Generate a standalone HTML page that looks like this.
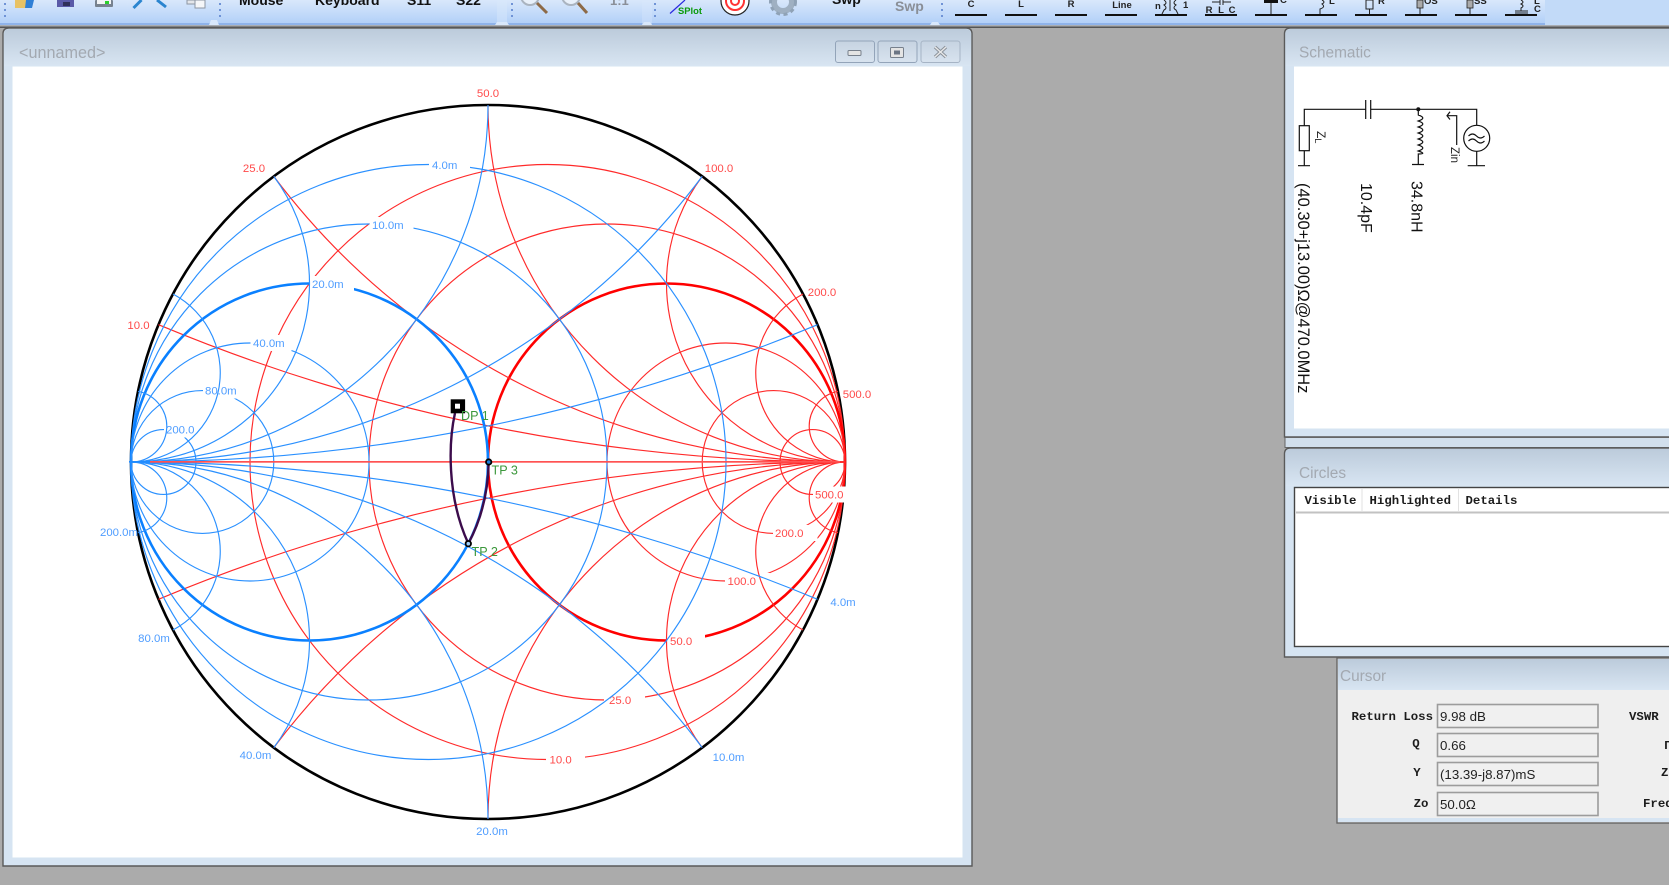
<!DOCTYPE html>
<html><head><meta charset="utf-8"><title>Smith</title>
<style>
html,body{margin:0;padding:0;width:1669px;height:885px;overflow:hidden;background:#ababab}
svg{display:block;filter:blur(.35px)}
text{font-family:"Liberation Sans",sans-serif}
.mono{font-family:"Liberation Mono",monospace;font-size:12.35px;fill:#1c1c1c;font-weight:bold}
.t{font-size:15.4px;fill:#a3a9b1}
.r{font-size:11.4px;fill:#ff4a4a}
.b{font-size:11.4px;fill:#4f9dff}
.g{font-size:12.6px;fill:#3c983c}
.f{font-size:13.3px;fill:#222}
.sch{font-size:16px;fill:#111}
.tb{font-size:14px;font-weight:bold;fill:#111}
.tl{font-size:9.5px;font-weight:bold;fill:#222}
</style></head>
<body>
<svg width="1669" height="885" viewBox="0 0 1669 885" xmlns="http://www.w3.org/2000/svg">
<defs>
<linearGradient id="tbg" x1="0" y1="0" x2="0" y2="1"><stop offset="0" stop-color="#d9e8fb"/><stop offset="1" stop-color="#b1cff8"/></linearGradient>
<linearGradient id="ttl" x1="0" y1="0" x2="0" y2="1"><stop offset="0" stop-color="#bccbdb"/><stop offset="1" stop-color="#d8e5f2"/></linearGradient>
<linearGradient id="btn" x1="0" y1="0" x2="0" y2="1"><stop offset="0" stop-color="#c6d3e1"/><stop offset="1" stop-color="#d8e3ef"/></linearGradient>
</defs>

<rect width="1669" height="885" fill="#ababab"/>

<!-- toolbar -->
<rect x="0" y="0" width="1669" height="25" fill="#c2daf8"/>
<rect x="0" y="0" width="1545" height="24" fill="url(#tbg)"/>
<rect x="0" y="23" width="1545" height="2" fill="#8fb3ea"/>
<rect x="0" y="25" width="1669" height="1.5" fill="#a9adb2"/>
<rect x="0" y="26.5" width="1669" height="1.5" fill="#555"/>
<g fill="#d9e8fb">
<path d="M209 25 l2 -5 h6 l2 5z"/><rect x="497" y="0" width="10" height="25" opacity=".45"/><path d="M495 25 l2 -3 h10 l2 3z"/>
<rect x="642" y="0" width="10" height="25" opacity=".35"/><path d="M642 25 l2 -3 h6 l2 3z"/><path d="M930 25 l2 -3 h6 l2 3z"/>
</g>
<g fill="#6f93d6">
<rect x="4" y="3" width="2" height="2"/><rect x="4" y="9" width="2" height="2"/><rect x="4" y="15" width="2" height="2"/>
<rect x="219" y="3" width="2" height="2"/><rect x="219" y="9" width="2" height="2"/><rect x="219" y="15" width="2" height="2"/>
<rect x="511" y="3" width="2" height="2"/><rect x="511" y="9" width="2" height="2"/><rect x="511" y="15" width="2" height="2"/>
<rect x="654" y="3" width="2" height="2"/><rect x="654" y="9" width="2" height="2"/><rect x="654" y="15" width="2" height="2"/>
<rect x="941" y="3" width="2" height="2"/><rect x="941" y="9" width="2" height="2"/><rect x="941" y="15" width="2" height="2"/>
</g>
<!-- left icons -->
<path d="M15 0h14v8H15z" fill="#e8c265"/><path d="M26 0h8l-2 8h-7z" fill="#2f7fd6"/>
<path d="M57 0h17v7H57z" fill="#5a5aa8"/><rect x="63" y="2" width="7" height="4" fill="#30305a"/>
<rect x="95" y="0" width="18" height="7" rx="1" fill="#77828f"/><rect x="97" y="0" width="14" height="4" fill="#f2f4f6"/><rect x="105" y="1" width="4" height="3" fill="#2bd02b"/>
<path d="M133.5 8L141.5 0" stroke="#2b85cf" stroke-width="3" fill="none"/><path d="M157 0L166 7" stroke="#2b85cf" stroke-width="3" fill="none"/>
<rect x="187" y="0" width="9" height="4" fill="#e4e6ea" stroke="#8d96a3"/><rect x="195" y="0" width="10" height="8" fill="#f5f6f8" stroke="#8d96a3"/>
<text class="tb" x="239" y="5">Mouse</text><text class="tb" x="315" y="5">Keyboard</text><text class="tb" x="407" y="5">S11</text><text class="tb" x="456" y="5">S22</text>
<!-- magnifiers -->
<circle cx="530" cy="-4" r="9" fill="#e8f0fa" stroke="#aab4c0" stroke-width="2"/><path d="M537 3L547 13" stroke="#8d6a47" stroke-width="3"/>
<circle cx="571" cy="-4" r="9" fill="#e8f0fa" stroke="#aab4c0" stroke-width="2"/><path d="M578 3L587 13" stroke="#8d6a47" stroke-width="3"/>
<text x="610" y="5" font-size="13" font-weight="bold" fill="#8a8f98">1:1</text>
<path d="M670 13.5L685 0" stroke="#2a2ae0" stroke-width="1.2"/><text x="678" y="14" font-size="9.4" font-weight="bold" fill="#0b9a0b">SPlot</text>
<circle cx="735" cy="1" r="14" fill="#fff" stroke="#222" stroke-width="1.2"/><circle cx="735" cy="1" r="9" fill="none" stroke="#f33" stroke-width="2"/><circle cx="735" cy="1" r="4" fill="none" stroke="#f33" stroke-width="2"/>
<circle cx="783" cy="2" r="9" fill="none" stroke="#9fb0c2" stroke-width="6"/><circle cx="783" cy="2" r="12.5" fill="none" stroke="#8fa2b6" stroke-width="3" stroke-dasharray="4 3.5"/>
<text class="tb" x="832" y="4">Swp</text><text x="895" y="11" font-size="14" font-weight="bold" fill="#8a8f97">Swp</text>
<!-- component bars -->
<g fill="#111">
<rect x="955" y="14" width="32" height="2"/><rect x="1005" y="14" width="32" height="2"/><rect x="1055" y="14" width="32" height="2"/><rect x="1105" y="14" width="32" height="2"/><rect x="1155" y="14" width="32" height="2"/><rect x="1205" y="14" width="32" height="2"/><rect x="1255" y="14" width="32" height="2"/><rect x="1305" y="14" width="32" height="2"/><rect x="1355" y="14" width="32" height="2"/><rect x="1405" y="14" width="32" height="2"/><rect x="1455" y="14" width="32" height="2"/><rect x="1505" y="14" width="32" height="2"/>
</g>
<text class="tl" x="971" y="7" text-anchor="middle">C</text><text class="tl" x="1021" y="7" text-anchor="middle">L</text><text class="tl" x="1071" y="7" text-anchor="middle">R</text><text class="tl" x="1122" y="8" text-anchor="middle">Line</text>
<text class="tl" x="1155" y="9">n</text><text class="tl" x="1183" y="8">1</text>
<g fill="none" stroke="#222" stroke-width="1">
<path d="M1164 0q4 3 0 5q4 3 0 5l-2 4M1176 0q-4 3 0 5q-4 3 0 5l2 4M1170 0v11"/>
<path d="M1212 2h8M1220 0v5M1223 0v5M1223 2h8"/>
<path d="M1271 0v14M1320 14v-5q6-2 2-5q4-2 0-4"/>
<path d="M1366 0h7v9h-7zM1369.5 9v5"/>
<path d="M1420 8v6M1470 8v6"/>
<path d="M1521 0q4 2 0 4q4 2 0 4v3M1515 11h13M1515 13h13"/>
</g>
<rect x="1264" y="0" width="14" height="3" fill="#111"/>
<rect x="1417" y="0" width="6" height="8" fill="#aaa" stroke="#222" stroke-width=".8"/><rect x="1467" y="0" width="6" height="8" fill="#aaa" stroke="#222" stroke-width=".8"/>
<text class="tl" x="1209" y="13" text-anchor="middle">R</text><text class="tl" x="1221" y="13" text-anchor="middle">L</text><text class="tl" x="1232" y="13" text-anchor="middle">C</text>
<text class="tl" x="1280" y="3">C</text><text class="tl" x="1329" y="4">L</text><text class="tl" x="1378" y="4">R</text><text class="tl" x="1424" y="4">OS</text><text class="tl" x="1474" y="4">SS</text><text class="tl" x="1534" y="4">L</text><text class="tl" x="1534" y="12">C</text>

<!-- main window -->
<path d="M3 866V34q0-6 6-6H966q6 0 6 6V866Z" fill="#d6e4f2" stroke="#5a5a5a" stroke-width="1.4"/>
<path d="M4 66V34q0-5 5-5H966q5 0 5 5V66Z" fill="url(#ttl)"/>
<rect x="12.5" y="66.5" width="950" height="791" fill="#fff"/>
<text class="t" style="font-size:16.2px" x="19" y="58">&lt;unnamed&gt;</text>
<g stroke="#93a4b9" stroke-width="1" fill="url(#btn)">
<rect x="835.5" y="41" width="39" height="21.5" rx="2.5"/><rect x="878" y="41" width="39" height="21.5" rx="2.5"/><rect x="921" y="41" width="39" height="21.5" rx="2.5" stroke="#a6b4c5"/>
</g>
<rect x="848" y="50.5" width="13" height="5" rx="1" fill="#e4e4e4" stroke="#77808c"/>
<rect x="890.5" y="47.5" width="13" height="10" rx="1" fill="#e4e4e4" stroke="#77808c"/><rect x="894" y="50.5" width="6" height="4" fill="#6b7584"/>
<path d="M935 47l11 10M946 47l-11 10" stroke="#8b929b" stroke-width="3.4"/><path d="M935 47l11 10M946 47l-11 10" stroke="#e8e8e8" stroke-width="1.4"/>

<!-- Smith chart -->
<circle cx="488" cy="462" r="357" fill="none" stroke="#000" stroke-width="2.6"/>
<!-- red constant-r -->
<g fill="none" stroke="#ff2a2a" stroke-width="1.15">
<circle cx="547.5" cy="462" r="297.5"/><circle cx="607" cy="462" r="238"/><circle cx="666.5" cy="462" r="178.5" stroke="#ff0000" stroke-width="2.6"/><circle cx="726" cy="462" r="119"/><circle cx="773.6" cy="462" r="71.4"/><circle cx="812.5" cy="462" r="32.45"/>
</g>
<g fill="#fff">
<rect x="546" y="751.5" width="39" height="16"/><rect x="604" y="692" width="41" height="16"/><rect x="667" y="633" width="38" height="16"/><rect x="725" y="573" width="45" height="16"/><rect x="773" y="525" width="44.5" height="16"/><rect x="813" y="486.5" width="44" height="16"/>
</g>
<!-- red constant-x -->
<g fill="none" stroke="#ff2a2a" stroke-width="1.15">
<path d="M158.500 324.700A1785 1785 0 0 0 845 462M158.500 599.300A1785 1785 0 0 1 845 462"/>
<path d="M273.800 176.400A714 714 0 0 0 845 462M273.800 747.600A714 714 0 0 1 845 462"/>
<path d="M488 105A357 357 0 0 0 845 462M488 819A357 357 0 0 1 845 462"/>
<path d="M702.200 176.400A178.500 178.500 0 0 0 845 462M702.200 747.600A178.500 178.500 0 0 1 845 462" transform="translate(0 0)"/>
<path d="M803 294A89.250 89.250 0 0 0 845 462M803 630A89.250 89.250 0 0 1 845 462"/>
<path d="M837.900 391.300A35.700 35.700 0 0 0 845 462M837.900 532.700A35.700 35.700 0 0 1 845 462"/>
</g>
<text class="r" x="549.5" y="763.5">10.0</text><text class="r" x="609" y="704">25.0</text><text class="r" x="670" y="645">50.0</text><text class="r" x="727.5" y="585">100.0</text><text class="r" x="775" y="537">200.0</text><text class="r" x="815" y="498.5">500.0</text>
<text class="r" x="488" y="97" text-anchor="middle">50.0</text><text class="r" x="254" y="172" text-anchor="middle">25.0</text><text class="r" x="719" y="172" text-anchor="middle">100.0</text><text class="r" x="138.5" y="329" text-anchor="middle">10.0</text><text class="r" x="822" y="296" text-anchor="middle">200.0</text><text class="r" x="857" y="398" text-anchor="middle">500.0</text>
<!-- blue constant-g -->
<g fill="none" stroke="#2a90ff" stroke-width="1.15">
<circle cx="428.5" cy="462" r="297.5"/><circle cx="369" cy="462" r="238"/><circle cx="309.5" cy="462" r="178.5" stroke="#0a80ff" stroke-width="2.6"/><circle cx="250" cy="462" r="119"/><circle cx="202.4" cy="462" r="71.4"/><circle cx="163.5" cy="462" r="32.45"/>
</g>
<g fill="#fff">
<rect x="429" y="157" width="41" height="16"/><rect x="369.5" y="217" width="44" height="16"/><rect x="310" y="276" width="44" height="16"/><rect x="250.5" y="335" width="41" height="16"/><rect x="203" y="382.5" width="44" height="16"/><rect x="164" y="421.5" width="44" height="16"/>
</g>
<!-- blue constant-b -->
<g fill="none" stroke="#2a90ff" stroke-width="1.15">
<path d="M817.500 324.700A1785 1785 0 0 1 131 462M817.500 599.300A1785 1785 0 0 0 131 462"/>
<path d="M702.200 176.400A714 714 0 0 1 131 462M702.200 747.600A714 714 0 0 0 131 462"/>
<path d="M488 105A357 357 0 0 1 131 462M488 819A357 357 0 0 0 131 462"/>
<path d="M273.800 176.400A178.500 178.500 0 0 1 131 462M273.800 747.600A178.500 178.500 0 0 0 131 462"/>
<path d="M173 294A89.250 89.250 0 0 1 131 462M173 630A89.250 89.250 0 0 0 131 462"/>
<path d="M138.100 391.300A35.700 35.700 0 0 1 131 462M138.100 532.700A35.700 35.700 0 0 0 131 462"/>
</g>
<text class="b" x="432" y="169">4.0m</text><text class="b" x="372" y="229">10.0m</text><text class="b" x="312" y="288">20.0m</text><text class="b" x="253" y="347">40.0m</text><text class="b" x="205" y="394.5">80.0m</text><text class="b" x="166" y="433.5">200.0</text>
<text class="b" x="492" y="835" text-anchor="middle">20.0m</text><text class="b" x="255.5" y="759" text-anchor="middle">40.0m</text><text class="b" x="728.5" y="761" text-anchor="middle">10.0m</text><text class="b" x="843" y="606" text-anchor="middle">4.0m</text><text class="b" x="154" y="642" text-anchor="middle">80.0m</text><text class="b" x="119" y="536" text-anchor="middle">200.0m</text>
<rect x="129" y="461" width="30" height="1.6" fill="#1f8bff"/>
<rect x="150" y="461" width="690" height="1.7" fill="#ff5252"/>
<!-- trace -->
<path d="M455 413C449 440 446 495 468.3 543.5C480 522 488 495 488.7 462" fill="none" stroke="#3c0c4c" stroke-width="2.4"/>
<rect x="450.7" y="399.3" width="14.4" height="14" fill="#000"/><rect x="455" y="403.7" width="5" height="5" fill="#fff"/>
<circle cx="488.7" cy="462" r="2.7" fill="#1c7fe0" stroke="#000" stroke-width="1.8"/>
<circle cx="468.3" cy="543.7" r="2.7" fill="#9fd0ff" stroke="#000" stroke-width="1.8"/>
<text class="g" x="461" y="420">DP 1</text><text class="g" x="491.5" y="474.5">TP 3</text><text class="g" x="471.5" y="556">TP 2</text>

<!-- schematic window -->
<path d="M1284.5 437V34q0-6 6-6H1680V437Z" fill="#d6e4f2" stroke="#5a5a5a" stroke-width="1.4"/>
<path d="M1285.5 66V34q0-5 5-5H1680V66Z" fill="url(#ttl)"/>
<rect x="1294" y="66.5" width="380" height="362" fill="#fff"/>
<text class="t" x="1299" y="57.5">Schematic</text>
<rect x="1285" y="437.5" width="390" height="10" fill="#d2dfec" stroke="#666" stroke-width="1"/>
<g fill="none" stroke="#111" stroke-width="1.2">
<path d="M1304.3 125.7V109.3H1365.7M1370.7 109.3H1476.7V125.3"/>
<path d="M1365.7 100V119M1370.7 100V119"/>
<rect x="1299.3" y="125.7" width="10" height="25"/>
<path d="M1304.3 150.7V165.7M1298 165.7H1310"/>
<path d="M1418.3 109.3V115q9 3 0 6q9 3 0 6q9 3 0 6q9 3 0 6q9 3 0 6q9 3 0 6q9 3 0 3V164M1412 164.500H1424"/>
<path d="M1456.700 145V115.700H1447M1450 111.800L1447 115.700L1450 119.500"/>
<circle cx="1476.700" cy="138.300" r="13"/>
<path d="M1476.700 151.300V165.700M1467.700 165.700H1485"/>
<path d="M1468.500 136q4-4 8 0t8 0M1468.500 141q4-4 8 0t8 0"/>
</g>
<circle cx="1418.300" cy="109.300" r="2" fill="#111"/>
<text x="1317" y="131" font-size="12" fill="#222" transform="rotate(90 1317 131)">Z<tspan font-size="9" dy="2">L</tspan></text>
<text x="1451" y="147" font-size="11.500" fill="#222" transform="rotate(90 1451 147)">Zin</text>
<text class="sch" style="font-size:16.450px" x="1298" y="183" transform="rotate(90 1298 183)">(40.30+j13.00)Ω@470.0MHz</text>
<text class="sch" x="1361" y="183" transform="rotate(90 1361 183)">10.4pF</text>
<text class="sch" x="1411.500" y="181" transform="rotate(90 1411.500 181)">34.8nH</text>

<!-- circles window -->
<path d="M1284.500 657V454q0-6 6-6H1680V657Z" fill="#d6e4f2" stroke="#5a5a5a" stroke-width="1.4"/>
<path d="M1285.500 486V454q0-5 5-5H1680V486Z" fill="url(#ttl)"/>
<text class="t" x="1299" y="478">Circles</text>
<rect x="1294.500" y="487.500" width="390" height="159" fill="#fff" stroke="#444" stroke-width="1.400"/>
<rect x="1296" y="511.500" width="380" height="2" fill="#c2c2c2"/>
<rect x="1361.500" y="489" width="1" height="22" fill="#e2e2e2"/><rect x="1458" y="489" width="1" height="22" fill="#e2e2e2"/>
<text class="mono" x="1304.500" y="504">Visible</text><text class="mono" x="1369.500" y="504">Highlighted</text><text class="mono" x="1465.500" y="504">Details</text>

<!-- cursor window -->
<rect x="1337" y="658" width="340" height="165" fill="#efefef" stroke="#666" stroke-width="1.400"/>
<rect x="1338" y="659" width="335" height="31" fill="url(#ttl)"/>
<rect x="1338" y="818" width="335" height="4" fill="#d6e4f2"/>
<text class="t" x="1340" y="681">Cursor</text>
<text class="mono" x="1433" y="720" text-anchor="end">Return Loss</text>
<text class="mono" x="1416" y="747" text-anchor="middle">Q</text>
<text class="mono" x="1417" y="776" text-anchor="middle">Y</text>
<text class="mono" x="1421" y="807" text-anchor="middle">Zo</text>
<text class="mono" x="1629" y="720">VSWR</text><text class="mono" x="1664" y="749">Γ</text><text class="mono" x="1661" y="776">Z</text><text class="mono" x="1643" y="807">Freq</text>
<g fill="#f0f0f0" stroke="#9c9c9c" stroke-width="1.600">
<rect x="1437.500" y="704.500" width="160.500" height="23"/><rect x="1437.500" y="733.500" width="160.500" height="23"/><rect x="1437.500" y="762.500" width="160.500" height="23"/><rect x="1437.500" y="792.500" width="160.500" height="23"/>
</g>
<text class="f" x="1440" y="721">9.98 dB</text><text class="f" x="1440" y="750">0.66</text><text class="f" x="1440" y="779">(13.39-j8.87)mS</text><text class="f" x="1440" y="809">50.0Ω</text>
</svg>
</body></html>
